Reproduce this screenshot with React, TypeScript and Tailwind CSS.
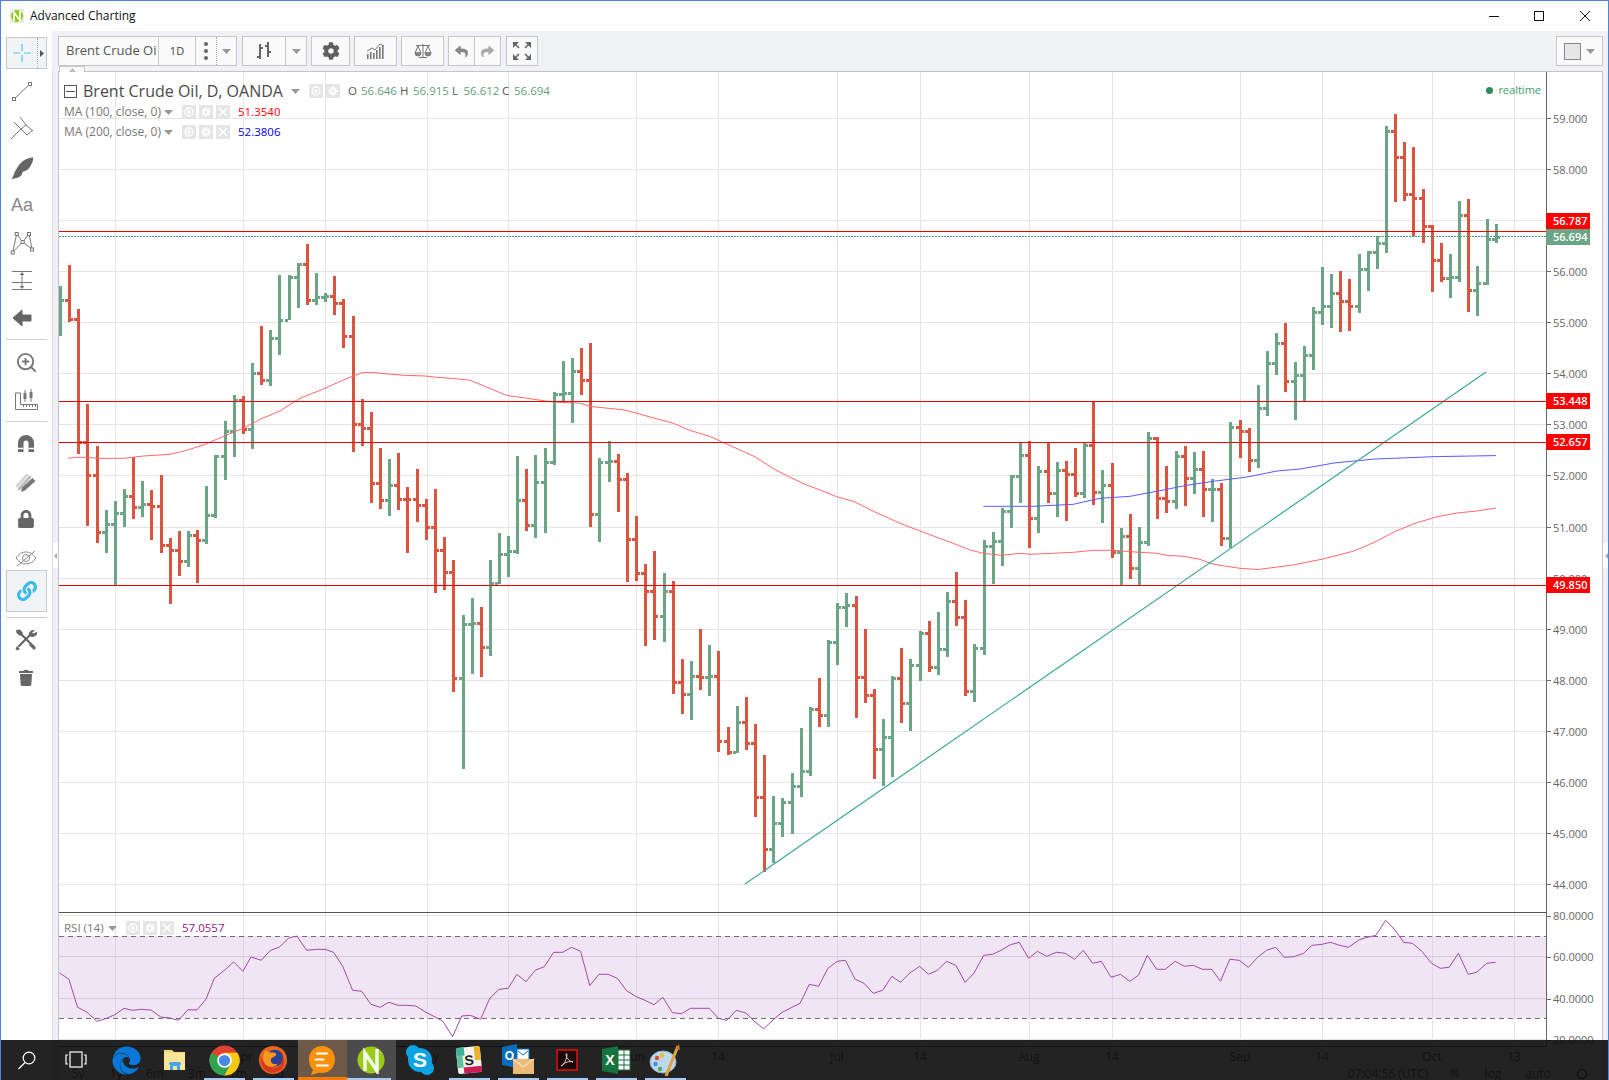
import React from "react";
import { FaCog, FaEdge, FaLink, FaLock, FaReply, FaShare, FaTrash } from "react-icons/fa";
import { ZoomIn } from "lucide-react";

const GREEN = "#6ba585";
const RED = "#d95540";

const B: number[][] = [
[60,286,336,330,300,1],[69,265,322,300,319,0],[78,309,454,319,442,0],[87,404,526,442,475,0],[97,446,543,475,532,0],
[106,510,553,532,524,1],[115,501,585,524,513,1],[124,489,527,513,496,1],[133,457,519,496,507,0],[142,481,517,507,504,1],
[151,490,540,504,506,0],[161,475,553,506,545,0],[170,538,604,545,550,0],[179,531,576,550,561,0],[188,531,567,561,535,1],
[197,530,583,535,540,0],[206,486,544,540,515,1],[215,455,518,515,456,1],[225,421,480,456,431,1],[234,395,457,431,400,1],
[243,396,434,400,429,0],[252,363,449,429,373,1],[261,326,385,373,380,0],[270,330,386,380,338,1],[279,275,355,338,320,1],
[289,275,320,320,277,1],[298,263,308,277,264,1],[307,244,305,264,300,0],[316,273,305,300,297,1],[325,293,302,297,296,1],
[334,276,315,296,303,0],[343,299,348,303,336,0],[353,316,452,336,424,0],[362,399,446,424,428,0],[371,412,503,428,483,0],
[380,448,509,483,500,0],[389,459,516,500,485,1],[398,453,510,485,499,0],[407,487,553,499,499,0],[417,469,522,499,505,0],
[426,499,540,505,527,0],[435,489,593,527,550,0],[444,537,590,550,572,0],[453,560,692,572,678,0],[463,615,769,678,624,1],
[472,598,674,624,623,1],[481,607,677,623,647,0],[490,560,656,647,583,1],[499,533,584,583,554,1],[508,536,577,554,551,1],
[517,456,554,551,500,1],[526,469,531,500,525,0],[535,455,538,525,482,1],[545,448,533,482,462,1],[554,392,465,462,394,1],
[563,361,401,394,393,1],[572,358,423,393,371,1],[581,348,395,371,380,0],[590,343,527,380,514,0],[599,458,542,514,462,1],
[609,441,482,462,461,1],[618,454,512,461,479,0],[627,473,582,479,539,0],[636,516,581,539,573,0],[645,564,646,573,591,0],
[654,551,640,591,616,0],[664,573,642,616,591,1],[673,581,694,591,682,0],[682,659,714,682,694,0],[691,661,720,694,676,1],
[700,629,690,676,677,0],[709,645,696,677,676,1],[718,651,752,676,741,0],[728,727,755,741,752,0],[737,706,753,752,722,1],
[746,697,750,722,743,0],[755,724,817,743,797,0],[764,755,872,797,849,0],[773,796,863,849,823,1],[782,798,837,823,802,1],
[792,773,834,802,786,1],[801,728,797,786,771,1],[810,707,776,771,709,1],[819,678,727,709,715,0],[828,640,727,715,642,1],
[837,603,665,642,607,1],[846,593,627,607,605,1],[856,596,718,605,677,0],[865,629,703,677,695,0],[874,689,779,695,749,0],
[883,719,786,749,737,1],[892,676,777,737,678,1],[901,648,723,678,703,0],[910,659,731,703,665,1],[920,631,681,665,633,1],
[929,621,672,633,667,0],[938,612,675,667,649,1],[947,592,657,649,601,1],[956,572,626,601,617,0],[965,600,696,617,691,0],
[974,644,702,691,648,1],[984,540,655,648,546,1],[993,532,584,546,541,1],[1002,508,566,541,511,1],[1011,475,528,511,476,1],
[1020,442,503,476,455,1],[1029,441,548,455,518,0],[1038,466,533,518,471,1],[1048,442,503,471,493,0],[1057,462,517,493,470,1],
[1066,461,521,470,474,0],[1075,448,497,474,493,0],[1084,442,498,493,445,1],[1093,401,505,445,492,0],[1102,470,523,492,485,1],
[1112,463,558,485,552,0],[1121,528,586,552,536,1],[1130,514,579,536,568,0],[1139,527,586,568,542,1],[1148,432,546,542,438,1],
[1157,437,519,438,498,0],[1166,466,513,498,501,0],[1176,451,509,501,456,1],[1185,446,506,456,478,0],[1194,452,494,478,469,1],
[1203,451,517,469,489,0],[1212,479,522,489,489,1],[1221,483,546,489,538,0],[1230,422,548,538,427,1],[1240,420,458,427,431,0],
[1249,428,472,431,460,0],[1258,385,468,460,408,1],[1267,351,416,408,363,1],[1276,333,375,363,343,1],[1285,323,392,343,381,0],
[1295,362,420,381,375,1],[1304,346,401,375,355,1],[1313,307,370,355,312,1],[1322,267,325,312,306,1],[1331,274,328,306,293,1],
[1340,271,332,293,301,0],[1349,279,331,301,306,0],[1359,254,313,306,269,1],[1368,251,291,269,252,1],[1377,236,269,252,243,1],
[1386,126,253,243,131,1],[1395,114,202,131,157,0],[1404,142,201,157,194,0],[1413,147,236,194,198,0],[1423,189,243,198,226,0],
[1432,225,292,226,260,0],[1441,243,282,260,278,0],[1450,254,298,278,277,1],[1459,201,282,277,215,1],[1468,199,312,215,290,0],
[1477,266,316,290,283,1],[1487,219,285,283,239,1],[1496,224,243,239,237,1],
];

const RSI_A = [117,219,135,238,152,322,170,336,190,364,207,356,225,344,243,325,260,331,278,328,296,330,315,351,333,354,350,361,368,329,386,330,404,297,420,235,440,211,458,186,476,214,492,171,512,181,530,151,547,142,566,114,582,108,601,151,620,148,637,148,654,157,672,200,691,271,709,274,727,313,745,322,762,307,780,316,798,316,815,318,833,335,850,349,868,364,887,410,905,348,922,346,942,358,960,295,978,268,996,265,1013,223,1031,245,1049,211,1067,200,1085,157,1103,157,1120,142,1138,154,1156,257,1174,223,1192,223,1210,235,1228,272,1246,289,1264,301,1282,314,1299,292,1318,338,1336,341,1353,325,1372,325,1390,325,1408,355,1425,361,1443,331,1462,339,1480,366,1497,386,1515,360,1533,337,1552,322,1568,310];
const RSI_B = [18,253,36,259,54,205,72,184,88,181,107,238,124,250,142,280,160,271,178,229,195,247,212,220,232,199,249,223,266,211,284,184,302,196,320,247,337,220,356,166,373,163,390,151,408,134,425,127,443,175,460,154,478,169,497,157,514,160,532,178,549,151,567,190,584,184,603,232,621,223,639,244,656,226,673,166,691,208,708,208,727,184,745,199,762,196,780,208,798,208,815,244,833,178,851,181,869,202,887,172,904,151,922,142,939,172,957,170,976,160,992,136,1012,133,1028,127,1046,136,1063,142,1083,120,1099,112,1116,106,1135,61,1152,88,1170,127,1187,130,1205,154,1224,190,1241,205,1258,202,1276,160,1295,223,1311,217,1331,190,1348,187];

function rsiPoints(): string {
  const out: string[] = [];
  for (let i = 0; i < RSI_A.length; i += 2) out.push(`${(RSI_A[i] / 1.96).toFixed(1)},${(900 + RSI_A[i + 1] / 3).toFixed(1)}`);
  for (let i = 0; i < RSI_B.length; i += 2) out.push(`${(800 + RSI_B[i] / 1.938).toFixed(1)},${(900 + RSI_B[i + 1] / 3).toFixed(1)}`);
  return out.join(" ");
}

const MA_A = "68,458.3 76.7,457.3 86.7,457.3 96.7,458.3 123.3,458.3 133.3,457.3 143.3,456 170,454.3 186.7,450.3 203.3,445 226.7,435 243.3,428.3 260,419.3 280,411 293.3,402.3 300,398.3 323.3,389 343.3,380 361.7,372.7 370,372.3 403.3,375.3 425,376 436.7,377.3 450,378.2 470,380.2 506.7,395.4 526.7,398.2 553.3,402.1 580,403.2 590,406.4 625,410 653.3,417.9 673.3,423.2 690,430.4 710,436.4 723.3,442.5 755,456.8 773.3,468.6 786.7,475.7 806.7,485 820,490 836.7,496.7 855,502 875,512 900,523.3 920,531 953.3,543.3 970,550 983.3,553.3 1001.7,555.3 1020,553.3 1030,554.3 1053.3,553.3 1073.3,552.3 1093.3,550.3 1113.3,550.3 1130,551.7 1156.7,553.3 1166.7,555.3 1183.3,556.3 1200,559.3 1210,563.3 1220,565.3 1240,568.3 1258,569.5 1293,565 1323,559 1354,551 1375,542 1395,531.5 1416,523 1436,517 1457,513 1477,511 1496,508";
const MA_B = "983.3,506.3 1010,506.3 1033.3,506.3 1073.3,504.3 1100,498.3 1130,496.3 1156.7,491.3 1186.7,485.3 1213.3,481.3 1247,477 1277,471 1300,469 1334,463 1375,459 1436,456.6 1496,455.6";

const HLINES = [115, 243, 325, 427, 508, 636, 718, 837, 920, 1029, 1112, 1240, 1322, 1432, 1514];
const PRICES = [[59, 118.3], [58, 169.3], [57, 220.3], [56, 271.3], [55, 322.3], [54, 373.3], [53, 424.3], [52, 475.3], [51, 527.3], [50, 578.3], [49, 629.3], [48, 680.3], [47, 731.3], [46, 782.3], [45, 833.3], [44, 884.3]];

function Chart() {
  return (
    <svg viewBox="59 72 1543 1008" width={1543} height={1008} className="block">
      <g stroke="#e4e4e4" strokeWidth="1" shapeRendering="crispEdges">
        {HLINES.map((x) => <line key={x} x1={x + 0.5} x2={x + 0.5} y1={72} y2={1046} />)}
        {PRICES.map(([v, y]) => <line key={v} x1={59} x2={1546} y1={Math.floor(y) + 0.5} y2={Math.floor(y) + 0.5} />)}
      </g>
      <rect x={59} y={936} width={1487} height={82} fill="#d9bfe0" opacity="0.4" />
      <g stroke="#dcc8de" strokeWidth="1" shapeRendering="crispEdges">
        <line x1={59} x2={1546} y1={956.5} y2={956.5} />
        <line x1={59} x2={1546} y1={998.5} y2={998.5} />
      </g>
      <line x1={59} x2={1546} y1={915.5} y2={915.5} stroke="#e4e4e4" shapeRendering="crispEdges" />
      <line x1={59} x2={1546} y1={1039.5} y2={1039.5} stroke="#e4e4e4" shapeRendering="crispEdges" />
      <g shapeRendering="crispEdges">
        {B.map(([x, h, l, o, c, g]) => {
          const col = g ? GREEN : RED;
          const left = Math.round(x - 1.5);
          return (
            <g key={x} fill={col}>
              <rect x={left} y={h} width={3} height={l - h} />
              <rect x={left - 3} y={Math.round(o - 1)} width={3} height={3} />
              <rect x={left + 3} y={Math.round(c - 1)} width={2} height={3} />
            </g>
          );
        })}
      </g>
      <polyline points={MA_A} fill="none" stroke="#ff6868" strokeWidth="1" />
      <polyline points={MA_B} fill="none" stroke="#5a5aff" strokeWidth="1" />
      <line x1={745} y1={884} x2={1486} y2={372} stroke="#3aa892" strokeWidth="1.2" />
      <g stroke="#ee0000" strokeWidth="1" shapeRendering="crispEdges">
        <line x1={59} x2={1546} y1={231.5} y2={231.5} />
        <line x1={59} x2={1546} y1={401.5} y2={401.5} />
        <line x1={59} x2={1546} y1={442.5} y2={442.5} />
        <line x1={59} x2={1546} y1={585.5} y2={585.5} />
      </g>
      <line x1={59} x2={1546} y1={236.5} y2={236.5} stroke="#4c9a75" strokeDasharray="2 1" shapeRendering="crispEdges" />
      <line x1={59} x2={1546} y1={912.5} y2={912.5} stroke="#555" shapeRendering="crispEdges" />
      <line x1={59} x2={1546} y1={1046.5} y2={1046.5} stroke="#333" shapeRendering="crispEdges" />
      <line x1={59} x2={1546} y1={1018.5} y2={1018.5} stroke="#776a78" strokeDasharray="5 4" shapeRendering="crispEdges" />
      <line x1={59} x2={1546} y1={936.5} y2={936.5} stroke="#776a78" strokeDasharray="5 4" shapeRendering="crispEdges" />
      <polyline points={rsiPoints()} fill="none" stroke="#a548aa" strokeWidth="1" />
      <line x1={1546.5} x2={1546.5} y1={72} y2={1046} stroke="#666" shapeRendering="crispEdges" />
      <g className="text-[11px]" fill="#666">
        {PRICES.map(([v, y]) => (
          <g key={v}>
            <line x1={1546} x2={1551} y1={Math.floor(y) + 0.5} y2={Math.floor(y) + 0.5} stroke="#666" shapeRendering="crispEdges" />
            <text x={1553} y={y + 4.7}>{v.toFixed(3)}</text>
          </g>
        ))}
        {[[80, 916], [60, 957], [40, 999], [20, 1040]].map(([v, y]) => (
          <g key={v}>
            <line x1={1546} x2={1551} y1={y} y2={y} stroke="#666" shapeRendering="crispEdges" />
            <text x={1553} y={y + 4}>{v.toFixed(4)}</text>
          </g>
        ))}
      </g>
      {[[213, "#ff0000", "56.787"], [229, "#6ba585", "56.694"], [393, "#ff0000", "53.448"], [434, "#ff0000", "52.657"], [577, "#ff0000", "49.850"]].map(([y, col, t]) => (
        <g key={t as string}>
          <rect x={1546} y={y as number} width={44} height={16} fill={col as string} />
          <text x={1553} y={(y as number) + 12} fill="#fff" className="text-[11px] font-semibold">{t}</text>
        </g>
      ))}
      <g className="text-[12px]" fill="#333" textAnchor="middle">
        {[[115, "1"], [243, "Apr"], [325, "14"], [427, "May"], [508, "14"], [636, "Jun"], [718, "14"], [837, "Jul"], [920, "14"], [1029, "Aug"], [1112, "14"], [1240, "Sep"], [1322, "14"], [1432, "Oct"], [1514, "13"]].map(([x, t]) => (
          <text key={x as number} x={x as number} y={1061}>{t}</text>
        ))}
        {[[78, "5y"], [116, "1y"], [155, "6m"], [197, "3m"], [238, "1m"], [277, "5d"], [313, "1d"], [1388, "07:04:56 (UTC)"], [1455, "%"], [1493, "log"]].map(([x, t]) => (
          <text key={x as number} x={x as number} y={1078}>{t}</text>
        ))}
        <text x={1538} y={1078} fill="#123a66">auto</text>
        <circle cx={1582} cy={1074} r={4.5} fill="none" stroke="#333" strokeWidth="1.6" />
      </g>
    </svg>
  );
}

function Caret({ className = "" }: { className?: string }) {
  return (
    <svg width="9" height="5" viewBox="0 0 9 5" className={`shrink-0 ${className}`}>
      <path d="M0 0h9L4.5 5z" fill="#999" />
    </svg>
  );
}

function MiniBox({ kind }: { kind: "eye" | "gear" | "x" }) {
  return (
    <span className="flex h-[14px] w-[14px] items-center justify-center bg-[#e5e5e5]">
      <svg width="10" height="10" viewBox="0 0 10 10">
        {kind === "eye" && <g fill="none" stroke="#fff" strokeWidth="1.3"><circle cx="5" cy="5" r="4" /><circle cx="5" cy="5" r="1.2" fill="#fff" /></g>}
        {kind === "gear" && <g fill="none" stroke="#fff"><circle cx="5" cy="5" r="2.5" strokeWidth="2" /><path d="M5 0v2M5 8v2M0 5h2M8 5h2M1.5 1.5l1.4 1.4M7.1 7.1l1.4 1.4M8.5 1.5L7.1 2.9M2.9 7.1L1.5 8.5" strokeWidth="1.3" /></g>}
        {kind === "x" && <path d="M1 1l8 8M9 1l-8 8" stroke="#fff" strokeWidth="1.5" />}
      </svg>
    </span>
  );
}

function Legend() {
  return (
    <div className="absolute left-[5px] top-[12px] flex flex-col text-[#777]">
      <div className="flex h-[14px] items-center">
        <span className="relative flex h-[13px] w-[13px] items-center justify-center border border-[#555]"><span className="h-px w-[9px] bg-[#555]" /></span>
        <span className="ml-[6px] w-[205px] whitespace-nowrap text-[16px] text-[#4a4a4a]">Brent Crude Oil, D, OANDA</span>
        <Caret className="ml-[3px]" />
        <span className="ml-[9px] flex gap-[3px]"><MiniBox kind="eye" /><MiniBox kind="gear" /></span>
        <span className="ml-[8px] flex items-center whitespace-nowrap text-[11.5px] text-[#555]">
          <span className="w-[13px]">O</span><span className="w-[39px] text-[#5f9f7c]">56.646</span>
          <span className="w-[13px]">H</span><span className="w-[39px] text-[#5f9f7c]">56.915</span>
          <span className="w-[11.5px]">L</span><span className="w-[38.5px] text-[#5f9f7c]">56.612</span>
          <span className="w-[12px]">C</span><span className="w-[39px] text-[#5f9f7c]">56.694</span>
        </span>
      </div>
      <MaRow name="MA (100, close, 0)" value="51.3540" color="text-[#ff0000]" mt="mt-[7px]" />
      <MaRow name="MA (200, close, 0)" value="52.3806" color="text-[#0000ff]" mt="mt-[6px]" />
    </div>
  );
}

function MaRow({ name, value, color, mt }: { name: string; value: string; color: string; mt: string }) {
  return (
    <div className={`flex h-[14px] items-center ${mt}`}>
      <span className="w-[100px] whitespace-nowrap text-[12px] text-[#777]">{name}</span>
      <Caret />
      <span className="ml-[9px] flex gap-[3px]"><MiniBox kind="eye" /><MiniBox kind="gear" /><MiniBox kind="x" /></span>
      <span className={`ml-[8px] text-[11.5px] ${color}`}>{value}</span>
    </div>
  );
}

function RsiLegend() {
  return (
    <div className="absolute left-[5px] top-[849px] flex h-[14px] items-center text-[11.5px] text-[#777]">
      <span className="w-[42px] whitespace-nowrap">RSI (14)</span>
      <Caret className="ml-[2px]" />
      <span className="ml-[9px] flex gap-[3px]"><MiniBox kind="eye" /><MiniBox kind="gear" /><MiniBox kind="x" /></span>
      <span className="ml-[8px] text-[#8b1a8b]">57.0557</span>
    </div>
  );
}

function S24({ children }: { children: React.ReactNode }) {
  return <svg width="24" height="24" viewBox="0 0 24 24">{children}</svg>;
}

function Tool({ mt, left, children }: { mt: string; left?: boolean; children: React.ReactNode }) {
  return <div className={`flex h-6 w-6 items-center justify-center ${mt} ${left ? "ml-[9px]" : "ml-[13px]"}`}>{children}</div>;
}

function Sep({ mt }: { mt: string }) {
  return <div className={`ml-[5px] h-px w-[41px] bg-[#cfcfcf] ${mt}`} />;
}

function Sidebar() {
  return (
    <div className="flex w-[51px] shrink-0 flex-col bg-white">
      <div className="ml-[5px] mt-[6px] flex h-[32px] w-[41px] border border-[#c8c8c8] bg-[#f1f4f7]">
        <div className="flex w-[31px] items-center justify-center border-r border-dotted border-[#aaa]">
          <svg width="18" height="18" viewBox="0 0 18 18"><path d="M9 0v7M9 11v7M0 9h7M11 9h7" stroke="#5bbfe8" strokeWidth="1.2" /></svg>
        </div>
        <div className="flex flex-1 items-center justify-center">
          <svg width="4" height="7" viewBox="0 0 4 7"><path d="M0 0l4 3.5L0 7z" fill="#555" /></svg>
        </div>
      </div>
      <Tool mt="mt-[10px]" left>
        <S24><g stroke="#777" fill="none"><rect x="2.5" y="18.5" width="3" height="3" /><rect x="18.5" y="3.5" width="3" height="3" /><path d="M5.5 18.5l13-12" /></g></S24>
      </Tool>
      <Tool mt="mt-[13px]" left>
        <S24><g stroke="#777" fill="none" strokeWidth="1"><path d="M1 23l10-10" /><path d="M4 6l7 7 5-4M10 1l6 8 7 6M11 13l6 6 6-5" /></g></S24>
      </Tool>
      <Tool mt="mt-[16px]" left>
        <S24><path d="M23 1.500c.7 1.500-.3 4-1.500 6.500-1.500 3.500-3.500 6-6.500 7l-2 .5-1 2.500C10.500 21.500 6 22.500 1.500 23c2-2.500 2.500-5.500 4-8.500l2.500-4C10 7.500 12.500 5 15.500 3.500c2.500-1.300 5.500-2.500 7.500-2z" fill="#666" /></S24>
      </Tool>
      <Tool mt="mt-[13px]" left><span className="font-['Liberation_Sans',sans-serif] text-[18px] leading-none text-[#888]">Aa</span></Tool>
      <Tool mt="mt-[14px]" left>
        <S24><g stroke="#777" fill="#fff" strokeWidth="1"><path d="M2.700 21L6.700 3l6 8L19 3l3 15-9.300-7L2.700 21z" fill="none" /><rect x="5.200" y="1.500" width="3" height="3" /><rect x="17.500" y="1.500" width="3" height="3" /><rect x="11.200" y="9.500" width="3" height="3" /><rect x="1.200" y="20" width="3" height="3" /><rect x="20.500" y="17" width="3" height="3" /></g></S24>
      </Tool>
      <Tool mt="mt-[13px]" left>
        <S24><g stroke="#777" strokeWidth="1" fill="none"><path d="M2 3.500h20M2 14.500h20M2 21.500h20M12 5v15" /></g><path d="M9.500 7L12 4l2.500 3zM9.500 18l2.500 3 2.500-3z" fill="#777" /></S24>
      </Tool>
      <Tool mt="mt-[14px]" left>
        <S24><path d="M3 12l9-8v5h9v6h-9v5z" fill="#666" stroke="#666" strokeWidth="1" strokeLinejoin="round" /></S24>
      </Tool>
      <Sep mt="mt-[9px]" />
      <Tool mt="mt-[10px]"><ZoomIn size={23} color="#777" strokeWidth={2} /></Tool>
      <Tool mt="mt-[14px]">
        <S24><g stroke="#777" fill="none"><path d="M1.500 5v16.500h22v-5h-17V5z" /><path d="M9.500 17v2M12.500 17v2M15.500 17v2M18.500 17v2M21.500 17v2" /><path d="M11 2v12M17 1v13" /></g><rect x="9.500" y="5" width="3" height="6" fill="#777" /><rect x="15.500" y="4" width="3" height="6" fill="#777" /></S24>
      </Tool>
      <Sep mt="mt-[9px]" />
      <Tool mt="mt-[10px]">
        <S24><path d="M4 20V11a8 8 0 0 1 16 0v9h-5.500v-9a2.500 2.500 0 0 0-5 0v9z" fill="#6a6a6a" /><path d="M4 16.500h5.500M14.500 16.500H20" stroke="#fff" strokeWidth="1.400" /></S24>
      </Tool>
      <Tool mt="mt-[15px]">
        <S24><g fill="none" strokeLinecap="round"><path d="M3 15L13 4" stroke="#d5d5d5" strokeWidth="3" /><path d="M5 18L16 6" stroke="#bdbdbd" strokeWidth="3" /></g><path d="M7 21l1-4.500L18.500 7l3 3L11 19.500z" fill="#777" /></S24>
      </Tool>
      <Tool mt="mt-[12px]"><FaLock size={18} color="#666" /></Tool>
      <Tool mt="mt-[15px]">
        <S24><g fill="none" stroke="#888" strokeWidth="1"><path d="M2 12c3-4 6-6 10-6s7 2 10 6c-3 4-6 6-10 6s-7-2-10-6z" /><circle cx="12" cy="12" r="3.500" /><path d="M3 20L21 5" /></g></S24>
      </Tool>
      <div className="ml-[5px] flex h-[42px] w-[41px] items-center justify-center border border-[#c8c8c8] bg-[#f1f4f7]"><FaLink size={20} color="#3db9ea" /></div>
      <Sep mt="mt-[5px]" />
      <Tool mt="mt-[10px]">
        <S24><g fill="none" stroke="#666" strokeLinecap="round"><path d="M6 5l14 14" strokeWidth="2.200" /><path d="M5 18L17 6" strokeWidth="2.200" /></g><path d="M2 2l4-.5 3 3.500-3 3-3.500-3zM21 2.500a4.500 4.500 0 0 0-6 5.500l3 1a4.500 4.500 0 0 0 5-5.500l-3 2-2-1zM3 18l3 3-3 1.500-1.500-1.500z" fill="#666" /><path d="M17 15l5 5-2 2-5-5z" fill="#666" /></S24>
      </Tool>
      <Tool mt="mt-[14px]"><FaTrash size={16} color="#666" /></Tool>
    </div>
  );
}

const btn = "flex h-[30px] items-center justify-center border border-[#c8c8c8] bg-[#fafafa]";

function Toolbar() {
  return (
    <div className="flex h-10 shrink-0 items-start pt-[5px] pl-[6px] pr-[5px]">
      <div className="flex h-[30px] w-[100px] items-center overflow-hidden whitespace-nowrap border border-r-0 border-[#c8c8c8] bg-[#fafafa] pl-[7px] text-[13px] text-[#555]">Brent Crude Oi</div>
      <div className={`${btn} w-[38px] text-[11px] text-[#444]`}>1D</div>
      <div className={`${btn} w-[41px] border-l-0`}>
        <div className="flex h-full w-[21px] flex-col items-center justify-center gap-[3px] border-r border-dotted border-[#aaa]">
          <span className="h-[4px] w-[4px] rounded-full bg-[#666]" /><span className="h-[4px] w-[4px] rounded-full bg-[#666]" /><span className="h-[4px] w-[4px] rounded-full bg-[#666]" />
        </div>
        <div className="flex flex-1 justify-center"><Caret /></div>
      </div>
      <div className={`${btn} ml-[5px] w-[65px]`}>
        <div className="flex h-full w-[43px] items-center justify-center border-r border-[#c8c8c8]">
          <svg width="20" height="20" viewBox="0 0 20 20"><g stroke="#666" strokeWidth="2" fill="none"><path d="M6 3v15M14 1v15M3 16h3M6 7h3M11 5h3M14 11h3" /></g></svg>
        </div>
        <div className="flex flex-1 justify-center"><Caret /></div>
      </div>
      <div className={`${btn} ml-[4px] w-[39px]`}><FaCog size={18} color="#5f5f5f" /></div>
      <div className={`${btn} ml-[4px] w-[43px]`}>
        <svg width="20" height="18" viewBox="0 0 20 18"><g fill="#777"><rect x="1" y="12" width="1.600" height="5" /><rect x="4" y="10" width="1.600" height="7" /><rect x="7" y="11" width="1.600" height="6" /><rect x="10" y="8" width="1.600" height="9" /><rect x="13" y="5" width="1.600" height="12" /><rect x="16" y="3" width="1.600" height="14" /></g><path d="M1 9l5-3 3 2 5-6 4 2" fill="none" stroke="#777" /></svg>
      </div>
      <div className={`${btn} ml-[4px] w-[43px]`}>
        <svg width="18" height="16" viewBox="0 0 18 16"><g fill="none" stroke="#777"><path d="M9 1v13M5 14.500h8M2 2.500h14" /><path d="M4 3L1 10h6zM14 3l-3 7h6z" /><path d="M1 10a3 3 0 0 0 6 0zM11 10a3 3 0 0 0 6 0z" fill="#888" /></g></svg>
      </div>
      <div className={`${btn} ml-[4px] w-[27px]`}><FaReply size={13} color="#888" /></div>
      <div className={`${btn} w-[26px] border-l-0`}><FaShare size={13} color="#aaa" /></div>
      <div className={`${btn} ml-[5px] w-[32px]`}>
        <svg width="18" height="18" viewBox="0 0 18 18"><g fill="#666"><path d="M0 0h6L0 6zM18 0h-6l6 6zM0 18h6l-6-6zM18 18h-6l6-6z" /></g><g stroke="#666" strokeWidth="1.600"><path d="M2 2l4 4M16 2l-4 4M2 16l4-4M16 16l-4-4" /></g></svg>
      </div>
      <div className={`${btn} ml-auto w-[47px] gap-[5px]`}>
        <span className="h-[17px] w-[17px] border border-[#888] bg-[#e6e6e6]" />
        <Caret />
      </div>
    </div>
  );
}

function Handle() {
  return (
    <div className="flex h-[25px] w-[6px] items-center justify-center bg-white">
      <svg width="3" height="6" viewBox="0 0 3 6"><path d="M3 0v6L0 3z" fill="#aaa" /></svg>
    </div>
  );
}

function Chrome() {
  return (
    <svg width="31" height="31" viewBox="0 0 32 32">
      <circle cx="16" cy="16" r="15.500" fill="#e2432f" />
      <path d="M16 16L2.600 8.200A15.500 15.500 0 0 0 16 31.500L23.500 18z" fill="#2fa34f" />
      <path d="M16 8h13.400A15.500 15.500 0 0 1 16 31.500L23 18z" fill="#f6c913" />
      <circle cx="16" cy="16" r="7.500" fill="#fff" /><circle cx="16" cy="16" r="5.800" fill="#4a88e8" />
    </svg>
  );
}

function Firefox() {
  return (
    <svg width="30" height="30" viewBox="0 0 32 32">
      <circle cx="16" cy="16" r="15" fill="#e8641f" />
      <circle cx="18" cy="14" r="9" fill="#2f3f8f" />
      <path d="M3 11c1 9 9 15 16 13 5-1 8-6 7-11 3 2 3 10-2 14-6 4-14 3-18-2-3-4-4-9-3-14z" fill="#d8381c" />
      <path d="M8 5c2 3 6 3 9 3 3 1 3 3 1 4-3 1-5 3-4 6 1 2 4 3 7 2-2 3-7 4-11 2-5-3-6-11-2-17z" fill="#f59a1f" />
    </svg>
  );
}

function Bubble() {
  return (
    <svg width="28" height="30" viewBox="0 0 28 30">
      <path d="M14 1c7.500 0 13 5.800 13 13.500S21.500 28 14 28c-1 0-2 0-3-.2L3 30l2-5C2.500 22.500 1 18.500 1 14.500 1 6.800 6.500 1 14 1z" fill="#f9910c" />
      <path d="M9 8.500h10M7.500 14.500h8M9 20.500h11" stroke="#fff" strokeWidth="2.200" strokeLinecap="round" />
    </svg>
  );
}

function NLogo({ size = 28 }: { size?: number }) {
  return (
    <svg width={size} height={size} viewBox="0 0 28 28">
      <circle cx="14" cy="14" r="13.500" fill="#9bcb1a" />
      <path d="M8 25V7l12 18V3" fill="none" stroke="#f4f8e8" strokeWidth="3.500" />
    </svg>
  );
}

function Skype() {
  return (
    <svg width="30" height="32" viewBox="0 0 30 32">
      <circle cx="15" cy="16" r="12" fill="#0fa3e3" /><circle cx="8" cy="8" r="7" fill="#0fa3e3" /><circle cx="22" cy="24" r="7" fill="#0fa3e3" />
      <text x="15" y="23" textAnchor="middle" fontSize="21" fontWeight="700" fill="#fff" fontFamily="'Liberation Sans',sans-serif">S</text>
    </svg>
  );
}

function Slack() {
  return (
    <svg width="28" height="30" viewBox="0 0 28 30">
      <g transform="rotate(-6 14 15)">
        <rect x="2" y="2" width="24" height="26" rx="2" fill="#f2f2ec" />
        <path d="M2 4a2 2 0 0 1 2-2h6v8H2z" fill="#3fb39a" /><path d="M20 2h4a2 2 0 0 1 2 2v12h-6z" fill="#ecb32d" />
        <path d="M8 22h18v4a2 2 0 0 1-2 2H8z" fill="#d01c52" /><rect x="2" y="10" width="6" height="12" fill="#63c1a0" />
        <text x="14" y="20" textAnchor="middle" fontSize="14" fontWeight="700" fill="#222" fontFamily="'Liberation Sans',sans-serif">S</text>
      </g>
    </svg>
  );
}

function Outlook() {
  return (
    <svg width="34" height="34" viewBox="0 0 34 34">
      <path d="M1 4l15-3v24L1 22z" fill="#0a6cbc" /><rect x="16" y="6" width="12" height="12" fill="#fff" stroke="#0a6cbc" />
      <path d="M17 8l5 4 5-4" fill="none" stroke="#0a6cbc" />
      <text x="8.500" y="17" textAnchor="middle" fontSize="12" fontWeight="700" fill="#fff" fontFamily="'Liberation Sans',sans-serif">O</text>
      <rect x="12" y="16" width="21" height="15" fill="#eeb877" /><path d="M12 16l10.500 8L33 16" fill="none" stroke="#fbe2bf" strokeWidth="1.200" />
    </svg>
  );
}

function Acrobat() {
  return (
    <svg width="22" height="22" viewBox="0 0 22 22">
      <rect x="1" y="1" width="20" height="20" fill="#1c0a0a" stroke="#e3100b" strokeWidth="1.500" />
      <path d="M5 17c3-1 5-5 6-11 0-2-1-2-1 0 1 4 3 6 7 7-4-1-8 0-12 4z" fill="none" stroke="#d9c8c8" strokeWidth="1" />
    </svg>
  );
}

function Excel() {
  return (
    <svg width="30" height="28" viewBox="0 0 30 28">
      <path d="M1 3l16-3v28L1 25z" fill="#16723f" /><rect x="17" y="4" width="12" height="20" fill="#fff" stroke="#16723f" />
      <path d="M17 9h12M17 14h12M17 19h12M23 4v20" stroke="#16723f" />
      <text x="9" y="19" textAnchor="middle" fontSize="14" fontWeight="700" fill="#fff" fontFamily="'Liberation Sans',sans-serif">X</text>
    </svg>
  );
}

function Palette() {
  return (
    <svg width="32" height="34" viewBox="0 0 32 34">
      <ellipse cx="14" cy="19" rx="13" ry="11" fill="#bcd8ea" stroke="#8fb0c6" />
      <circle cx="8" cy="15" r="2.200" fill="#e3492d" /><circle cx="13" cy="12.500" r="2.200" fill="#eac02c" /><circle cx="6.500" cy="21" r="2.200" fill="#3f8fdc" /><circle cx="11" cy="26" r="2.200" fill="#4caf50" />
      <path d="M17 33L29 3" stroke="#e0a142" strokeWidth="3" /><path d="M27 6l3-5 1 6z" fill="#b77730" />
    </svg>
  );
}

function Slot({ children, kind }: { children: React.ReactNode; kind?: "u" | "orange" | "active" }) {
  const bg = kind === "orange" ? "bg-[#6e5848]" : kind === "active" ? "bg-[#4b4b4b]" : "";
  return (
    <div className={`relative flex h-10 w-[49px] shrink-0 items-center justify-center ${bg}`}>
      {children}
      {kind === "u" && <span className="absolute bottom-0 left-[4px] h-[2px] w-[41px] bg-[#a9c9f5]" />}
      {kind === "orange" && <span className="absolute bottom-0 left-0 h-[3px] w-full bg-[#f57c00]" />}
      {kind === "active" && <span className="absolute bottom-0 left-0 h-[2px] w-[44px] bg-[#a9c9f5]" />}
    </div>
  );
}

function Taskbar() {
  return (
    <div className="absolute bottom-0 -left-px flex h-10 w-[1609px] bg-[rgba(16,16,16,0.92)] pl-[2px]">
      <Slot>
        <svg width="20" height="20" viewBox="0 0 20 20" fill="none" stroke="#fff" strokeWidth="1.200"><circle cx="12" cy="8" r="5.800" /><path d="M8 12.500L1.500 19" /></svg>
      </Slot>
      <Slot>
        <svg width="22" height="18" viewBox="0 0 22 18" fill="none" stroke="#fff" strokeWidth="1.200"><rect x="5" y="1" width="12" height="15" /><path d="M3 4H1v9h2M19 4h2v9h-2" /></svg>
      </Slot>
      <div className="w-[1.5px] shrink-0" />
      <Slot><FaEdge size={29} color="#0a78d8" /></Slot>
      <Slot>
        <svg width="24" height="24" viewBox="0 0 24 24"><path d="M1 2h8l2 2h11v18H1z" fill="#f4d875" /><rect x="1" y="5" width="21" height="17" fill="#fbe59a" /><path d="M7 14h10l1.500 2.500H17V22h-3v-4h-4v4H7v-5.500H5.500z" fill="#3fa9e6" /></svg>
      </Slot>
      <Slot kind="u"><Chrome /></Slot>
      <Slot kind="u"><Firefox /></Slot>
      <Slot kind="orange"><Bubble /></Slot>
      <Slot kind="active"><NLogo /></Slot>
      <Slot><Skype /></Slot>
      <Slot kind="u"><Slack /></Slot>
      <Slot kind="u"><Outlook /></Slot>
      <Slot kind="u"><Acrobat /></Slot>
      <Slot kind="u"><Excel /></Slot>
      <Slot kind="u"><Palette /></Slot>
    </div>
  );
}

export default function App() {
  return (
    <div className="relative flex h-[1080px] w-[1609px] flex-col overflow-hidden border-x border-t border-[#4a86d8] bg-white font-['Open_Sans',sans-serif]">
      <div className="flex h-[30px] shrink-0 items-center bg-white">
        <span className="ml-[9px]"><svg width="14" height="14" viewBox="0 0 14 14"><rect width="14" height="14" fill="#e9ece4" /><circle cx="7" cy="7" r="6" fill="#95c91e" /><path d="M4 12V3.500l6 8V2" fill="none" stroke="#fff" strokeWidth="1.600" /></svg></span>
        <span className="ml-[6px] whitespace-nowrap text-[12px] text-[#111]">Advanced Charting</span>
        <div className="ml-auto flex items-center">
          <span className="h-px w-[10px] bg-[#111]" />
          <span className="ml-[35px] h-[10px] w-[10px] border border-[#111]" />
          <svg className="ml-[36px] mr-[18px]" width="10" height="10" viewBox="0 0 10 10"><path d="M0 0l10 10M10 0L0 10" stroke="#111" strokeWidth="1" /></svg>
        </div>
      </div>
      <div className="flex min-h-0 flex-1">
        <Sidebar />
        <div className="flex min-w-0 flex-1 flex-col bg-[#f0f1f5]">
          <Toolbar />
          <div className="flex min-h-0 flex-1">
            <div className="flex w-[6px] shrink-0 items-start border-l border-[#dcdcdc] pt-[472px]"><Handle /></div>
            <div className="relative h-full w-[1545px] shrink-0 border-x border-t border-[#c4c4c8] bg-white">
              <Chart />
              <Legend />
              <RsiLegend />
              <div className="absolute -top-[6px] left-0 flex h-[6px] w-[26px] items-center justify-center border-x border-t border-[#c8c8c8] bg-[#fafafa]">
                <svg width="7" height="4" viewBox="0 0 7 4"><path d="M0 4h7L3.500 0z" fill="#bbb" /></svg>
              </div>
              <div className="absolute right-[61px] top-[10px] flex h-4 items-center gap-[5px] text-[11px] text-[#3f9c6e]">
                <span className="h-[7px] w-[7px] rounded-full bg-[#2d8a5a]" />
                <span>realtime</span>
              </div>
            </div>
            <div className="flex flex-1 items-start pt-[472px]"><Handle /></div>
          </div>
        </div>
      </div>
      <Taskbar />
    </div>
  );
}
